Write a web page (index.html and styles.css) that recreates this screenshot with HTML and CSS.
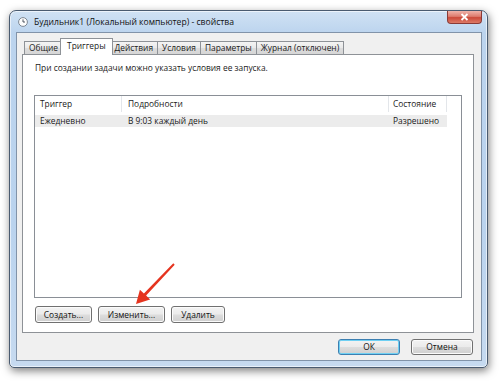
FILE: index.html
```html
<!DOCTYPE html>
<html lang="ru">
<head>
  <meta charset="UTF-8">
  <title>Будильник1 - свойства</title>
  <link rel="stylesheet" href="styles.css">
</head>
<body>

  <div class="window">
    <div class="titlebar">
      <svg class="app-icon" width="10" height="10" viewBox="0 0 10 10">
        <circle cx="5" cy="5" r="4.4" fill="#fdfdfd" stroke="#7d8793" stroke-width="1"/>
        <path d="M5 2.4 V5 H7" fill="none" stroke="#3a4450" stroke-width="0.9"/>
      </svg>
      <span class="title">Будильник1 (Локальный компьютер) - свойства</span>
      <div class="close-btn">
        <svg width="9" height="8" viewBox="0 0 9 8">
          <path d="M1.5 1 L7.5 7 M7.5 1 L1.5 7" stroke="#fff" stroke-width="1.8"/>
        </svg>
      </div>
    </div>

    <div class="client">
      <div class="tabs">
        <div class="tab">Общие</div>
        <div class="tab active">Триггеры</div>
        <div class="tab">Действия</div>
        <div class="tab">Условия</div>
        <div class="tab">Параметры</div>
        <div class="tab">Журнал (отключен)</div>
      </div>

      <div class="panel">
        <p class="hint">При создании задачи можно указать условия ее запуска.</p>

        <div class="listview">
          <div class="lv-row lv-header">
            <div class="cell">Триггер</div>
            <div class="cell">Подробности</div>
            <div class="cell">Состояние</div>
            <div class="cell filler"></div>
          </div>
          <div class="lv-row lv-item">
            <div class="cell">Ежедневно</div>
            <div class="cell">В 9:03 каждый день</div>
            <div class="cell">Разрешено</div>
          </div>
        </div>

        <div class="list-buttons">
          <button class="btn btn-create">Создать...</button>
          <button class="btn btn-edit">Изменить...</button>
          <button class="btn btn-delete">Удалить</button>
        </div>
      </div>

      <div class="footer">
        <button class="btn btn-dialog default">ОК</button>
        <button class="btn btn-dialog">Отмена</button>
      </div>
    </div>
  </div>

  <!-- стрелка поверх кнопки "Изменить..." -->
  <svg class="arrow" width="500" height="382" viewBox="0 0 500 382">
    <polygon points="173.3,263.3 143.9,293.6 139.9,289.8 136,304 150.1,299.4 146.1,295.6 174.7,264.7" fill="#e5341f"/>
  </svg>

</body>
</html>
```

FILE: styles.css
```css
body {
  margin: 0;
  padding: 10px 0 0 9px;
  width: 500px;
  height: 382px;
  box-sizing: border-box;
  overflow: hidden;
  background: #fff;
  font-family: "Open Sans", "Noto Sans", sans-serif;
  font-size: 8.4px;
  color: #1a1a1a;
  position: relative;
}

.window {
  width: 479px;
  height: 358px;
  box-sizing: border-box;
  border: 1px solid #4a5b70;
  border-radius: 7px 7px 5px 5px;
  background: linear-gradient(#d0e2f4, #bcd4ee 22px, #bad3ee 60%, #c6daf0);
  box-shadow: 1px 3px 8px rgba(0,0,0,0.5), inset 0 0 0 1px rgba(255,255,255,0.6);
  padding: 0 5px 6px 6px;
  display: flex;
  flex-direction: column;
}

.titlebar {
  height: 21px;
  display: flex;
  align-items: center;
  flex-shrink: 0;
}

.app-icon {
  margin-left: 2px;
  margin-right: 6px;
}

.title {
  color: #111;
  font-size: 8.6px;
}

.close-btn {
  margin-left: auto;
  align-self: flex-start;
  width: 35px;
  height: 13px;
  box-sizing: border-box;
  border: 1px solid #8a3a36;
  border-top: none;
  border-radius: 0 0 4px 4px;
  background: linear-gradient(#efb3aa, #dd7c6e 45%, #cb4a3a 55%, #dd7a66);
  display: flex;
  align-items: center;
  justify-content: center;
}

.client {
  flex: 1;
  border: 1px solid #8193a9;
  background: #f0f0f0;
  padding: 6px 7px 4px 5px;
  display: flex;
  flex-direction: column;
}

.tabs {
  display: flex;
  align-items: flex-end;
  height: 15px;
  padding-left: 3px;
  position: relative;
  z-index: 1;
}

.tab {
  height: 13px;
  line-height: 12px;
  padding: 0 4px;
  border: 1px solid #8e9297;
  border-bottom: none;
  margin-left: -1px;
  background: linear-gradient(#f4f4f4, #e9e9e9 50%, #dddddd 50%, #d6d6d6);
  box-sizing: border-box;
}

.tab.active {
  height: 17px;
  line-height: 14px;
  margin-bottom: -1px;
  padding: 0 6px;
  margin-left: -3px;
  margin-right: -2px;
  background: #fff;
  position: relative;
  z-index: 2;
}

.panel {
  height: 279px;
  box-sizing: border-box;
  border: 1px solid #8e9297;
  background: #fff;
  padding: 0 11px;
  display: flex;
  flex-direction: column;
}

.hint {
  margin: 6px 0 0 1px;
  line-height: 13px;
}

.listview {
  margin-top: 21px;
  height: 203px;
  box-sizing: border-box;
  border: 1px solid #8a8f96;
  background: #fff;
}

.lv-row {
  display: grid;
  grid-template-columns: 87px 267px 58px 1fr;
}

.lv-header {
  height: 16px;
  line-height: 15px;
}

.lv-header .cell {
  border-right: 1px solid #e3e6ea;
  box-sizing: border-box;
}

.lv-header .filler {
  border-right: none;
}

.lv-item {
  grid-template-columns: 87px 267px 58px;
  margin-top: 3px;
  height: 12px;
  line-height: 12px;
  background: #ececec;
  width: 412px;
}

.cell {
  white-space: nowrap;
  overflow: hidden;
}

.cell:nth-child(1) { padding-left: 5px; }
.cell:nth-child(2) { padding-left: 6px; }
.cell:nth-child(3) { padding-left: 4px; }

.list-buttons {
  display: flex;
  gap: 6px;
  margin-top: 8px;
  padding-left: 1px;
}

.btn {
  height: 17px;
  box-sizing: border-box;
  padding: 0;
  font-family: inherit;
  font-size: 8.4px;
  color: #111;
  border: 1px solid #707070;
  border-radius: 3px;
  background: linear-gradient(#f3f3f3, #ebebeb 48%, #dddddd 52%, #cfcfcf);
  box-shadow: inset 0 0 0 1px #fbfbfb;
  line-height: 14px;
}

.btn-create { width: 57px; }
.btn-edit { width: 67px; }
.btn-delete { width: 54px; }

.footer {
  display: flex;
  justify-content: flex-end;
  gap: 11px;
  margin-top: 6px;
  padding-right: 1px;
}

.btn-dialog {
  width: 62px;
  height: 16px;
}

.btn.default {
  border-color: #3c7fb1;
  box-shadow: inset 0 0 0 1px #6fd0f3;
}

.arrow {
  position: absolute;
  left: 0;
  top: 0;
  pointer-events: none;
}
```
